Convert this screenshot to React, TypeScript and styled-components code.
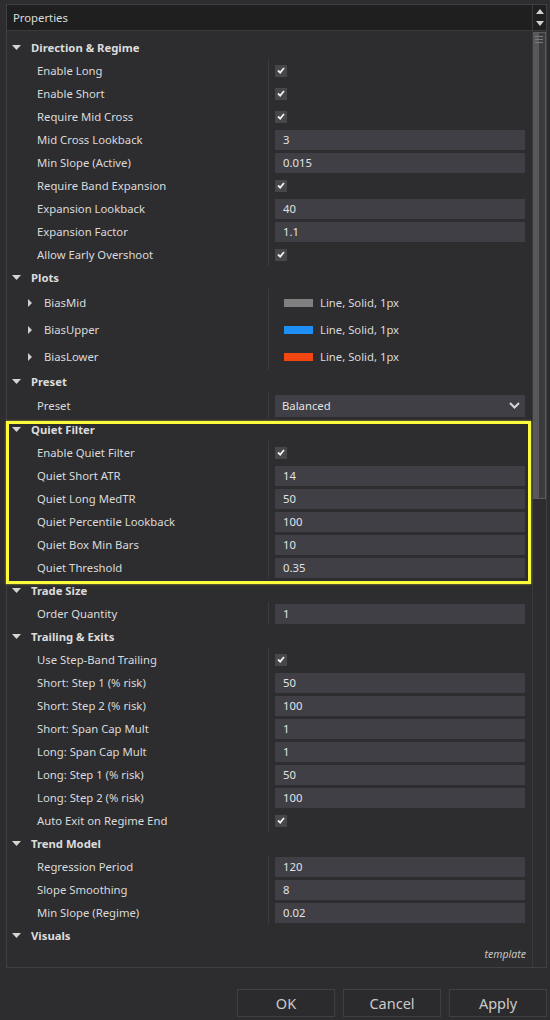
import styled, { createGlobalStyle } from 'styled-components'

type Field =
  | { kind: 'check'; label: string }
  | { kind: 'text'; label: string; value: string }
  | { kind: 'plot'; label: string; color: string }
  | { kind: 'select'; label: string; value: string }

interface SectionType {
  title: string
  fields: Field[]
  highlighted?: boolean
}

const sections: SectionType[] = [
  {
    title: 'Direction & Regime',
    fields: [
      { kind: 'check', label: 'Enable Long' },
      { kind: 'check', label: 'Enable Short' },
      { kind: 'check', label: 'Require Mid Cross' },
      { kind: 'text', label: 'Mid Cross Lookback', value: '3' },
      { kind: 'text', label: 'Min Slope (Active)', value: '0.015' },
      { kind: 'check', label: 'Require Band Expansion' },
      { kind: 'text', label: 'Expansion Lookback', value: '40' },
      { kind: 'text', label: 'Expansion Factor', value: '1.1' },
      { kind: 'check', label: 'Allow Early Overshoot' },
    ],
  },
  {
    title: 'Plots',
    fields: [
      { kind: 'plot', label: 'BiasMid', color: '#808080' },
      { kind: 'plot', label: 'BiasUpper', color: '#1e8ff5' },
      { kind: 'plot', label: 'BiasLower', color: '#f24712' },
    ],
  },
  {
    title: 'Preset',
    fields: [{ kind: 'select', label: 'Preset', value: 'Balanced' }],
  },
  {
    title: 'Quiet Filter',
    highlighted: true,
    fields: [
      { kind: 'check', label: 'Enable Quiet Filter' },
      { kind: 'text', label: 'Quiet Short ATR', value: '14' },
      { kind: 'text', label: 'Quiet Long MedTR', value: '50' },
      { kind: 'text', label: 'Quiet Percentile Lookback', value: '100' },
      { kind: 'text', label: 'Quiet Box Min Bars', value: '10' },
      { kind: 'text', label: 'Quiet Threshold', value: '0.35' },
    ],
  },
  {
    title: 'Trade Size',
    fields: [{ kind: 'text', label: 'Order Quantity', value: '1' }],
  },
  {
    title: 'Trailing & Exits',
    fields: [
      { kind: 'check', label: 'Use Step-Band Trailing' },
      { kind: 'text', label: 'Short: Step 1 (% risk)', value: '50' },
      { kind: 'text', label: 'Short: Step 2 (% risk)', value: '100' },
      { kind: 'text', label: 'Short: Span Cap Mult', value: '1' },
      { kind: 'text', label: 'Long: Span Cap Mult', value: '1' },
      { kind: 'text', label: 'Long: Step 1 (% risk)', value: '50' },
      { kind: 'text', label: 'Long: Step 2 (% risk)', value: '100' },
      { kind: 'check', label: 'Auto Exit on Regime End' },
    ],
  },
  {
    title: 'Trend Model',
    fields: [
      { kind: 'text', label: 'Regression Period', value: '120' },
      { kind: 'text', label: 'Slope Smoothing', value: '8' },
      { kind: 'text', label: 'Min Slope (Regime)', value: '0.02' },
    ],
  },
  { title: 'Visuals', fields: [] },
]

const GlobalStyle = createGlobalStyle`
  html, body {
    margin: 0;
    background: #2d2d30;
    overflow: hidden;
  }
  body {
    font-family: "Noto Sans", "Open Sans", sans-serif;
    font-size: 11.3px;
    color: #dadada;
  }
`

const Window = styled.div`
  width: 550px;
  height: 1020px;
  display: flex;
  flex-direction: column;
`

const Panel = styled.div`
  margin: 4px 0 0 6px;
  width: 539px;
  height: 962px;
  border: 1px solid #3f3f44;
  display: grid;
  grid-template-columns: 525px 14px;
  grid-template-rows: 26px 1fr;
`

const TitleBar = styled.div`
  background: #1f1f20;
  border-bottom: 1px solid #3a3a3d;
  display: flex;
  align-items: center;
  padding-left: 6px;
  color: #dcdcdc;
`

const ArrowCell = styled.div`
  background: #1f1f20;
  border-left: 1px solid #3a3a3d;
  border-bottom: 1px solid #3a3a3d;
  display: flex;
  flex-direction: column;
  align-items: center;
  justify-content: center;
  gap: 7px;
`

const Track = styled.div`
  border-left: 1px solid #3a3a3d;
  padding-top: 1px;
`

const Thumb = styled.div`
  height: 467px;
  border: 1px solid #5c5c5f;
  border-left: none;
  background: linear-gradient(to right, #58585b 0 6px, #3b3b3e 6px);
  display: flex;
  flex-direction: column;
  align-items: center;
  gap: 2px;
  padding-top: 3px;
  box-sizing: border-box;
`

const Grip = styled.div`
  width: 8px;
  height: 1px;
  background: #7a7a7d;
`

const Body = styled.div`
  display: flex;
  flex-direction: column;
  min-height: 0;
`

const List = styled.div`
  flex: 1;
  padding-top: 5px;
`

const Template = styled.div`
  height: 20px;
  padding: 0 6px 4px 0;
  text-align: right;
  font-style: italic;
  font-size: 10.5px;
  color: #c4c4c4;
`

const SectionBox = styled.div<{ $highlighted?: boolean }>`
  position: relative;
  &::after {
    content: '';
    display: ${(p) => (p.$highlighted ? 'block' : 'none')};
    position: absolute;
    top: 3px;
    bottom: -5px;
    left: -1px;
    right: 1px;
    border: 3px solid #fbfb3c;
    box-shadow: 0 0 2px rgba(251, 251, 60, 0.6);
    pointer-events: none;
  }
`

const SectionHeader = styled.div`
  height: 23px;
  display: flex;
  align-items: center;
  padding-left: 5px;
  gap: 10px;
  font-weight: 700;
  color: #dcdcdc;
`

const Row = styled.div<{ $height: number }>`
  height: ${(p) => p.$height}px;
  display: grid;
  grid-template-columns: 261px 1fr;
`

const Label = styled.div<{ $indent: number }>`
  display: flex;
  align-items: center;
  padding-left: ${(p) => p.$indent}px;
  gap: 11px;
  white-space: nowrap;
`

const ValueCell = styled.div`
  border-left: 1px solid #3c3c40;
  display: flex;
  align-items: center;
  padding: 0 7px 0 6px;
`

const CheckBox = styled.div`
  width: 12px;
  height: 12px;
  background: #46464b;
  display: flex;
  align-items: center;
  justify-content: center;
`

const TextBox = styled.div`
  flex: 1;
  height: 20px;
  background: #3f3f45;
  display: flex;
  align-items: center;
  padding-left: 8px;
  color: #e2e2e2;
`

const SelectBox = styled(TextBox)`
  height: 22px;
  padding: 0 5px 0 7px;
  justify-content: space-between;
`

const PlotValue = styled.div`
  display: flex;
  align-items: center;
  gap: 7px;
  padding-left: 9px;
`

const Swatch = styled.div<{ $color: string }>`
  width: 29px;
  height: 8px;
  background: ${(p) => p.$color};
`

const ButtonRow = styled.div`
  display: flex;
  justify-content: flex-end;
  gap: 8px;
  padding: 21px 3px 0 0;
`

const Button = styled.button`
  width: 98px;
  height: 28px;
  background: #2b2b2e;
  border: 1px solid #3f3f44;
  color: #cacaca;
  font-family: "Noto Sans", "Open Sans", sans-serif;
  font-size: 14.5px;
  padding: 0;
`

function Caret({ right }: { right?: boolean }) {
  return right ? (
    <svg width="5" height="8" viewBox="0 0 5 8">
      <polygon points="0,0 4,4 0,8" fill="#cfcfcf" />
    </svg>
  ) : (
    <svg width="9" height="6" viewBox="0 0 9 6">
      <polygon points="0,0 9,0 4.5,5" fill="#d4d4d4" />
    </svg>
  )
}

function Check() {
  return (
    <svg width="8" height="7" viewBox="0 0 8 7">
      <path d="M1 3.5 L3.2 5.6 L7 1" stroke="#f0f0f0" strokeWidth="1.8" fill="none" />
    </svg>
  )
}

function Chevron() {
  return (
    <svg width="11" height="7" viewBox="0 0 11 7">
      <path d="M1 1 L5.5 5.5 L10 1" stroke="#d6d6d6" strokeWidth="2" fill="none" />
    </svg>
  )
}

function FieldRow({ field }: { field: Field }) {
  if (field.kind === 'plot') {
    return (
      <Row $height={27}>
        <Label $indent={21}>
          <Caret right />
          {field.label}
        </Label>
        <ValueCell>
          <PlotValue>
            <Swatch $color={field.color} />
            Line, Solid, 1px
          </PlotValue>
        </ValueCell>
      </Row>
    )
  }
  return (
    <Row $height={field.kind === 'select' ? 25 : 23}>
      <Label $indent={30}>{field.label}</Label>
      <ValueCell>
        {field.kind === 'check' && (
          <CheckBox>
            <Check />
          </CheckBox>
        )}
        {field.kind === 'text' && <TextBox>{field.value}</TextBox>}
        {field.kind === 'select' && (
          <SelectBox>
            {field.value}
            <Chevron />
          </SelectBox>
        )}
      </ValueCell>
    </Row>
  )
}

export default function App() {
  return (
    <Window>
      <GlobalStyle />
      <Panel>
        <TitleBar>Properties</TitleBar>
        <ArrowCell>
          <svg width="8" height="5" viewBox="0 0 8 5">
            <polygon points="0,5 8,5 4,0" fill="#d0d0d0" />
          </svg>
          <svg width="8" height="5" viewBox="0 0 8 5">
            <polygon points="0,0 8,0 4,5" fill="#d0d0d0" />
          </svg>
        </ArrowCell>
        <Body>
          <List>
            {sections.map((s) => (
              <SectionBox key={s.title} $highlighted={s.highlighted}>
                <SectionHeader>
                  <Caret />
                  {s.title}
                </SectionHeader>
                {s.fields.map((f) => (
                  <FieldRow key={f.label} field={f} />
                ))}
              </SectionBox>
            ))}
          </List>
          <Template>template</Template>
        </Body>
        <Track>
          <Thumb>
            <Grip />
            <Grip />
            <Grip />
          </Thumb>
        </Track>
      </Panel>
      <ButtonRow>
        <Button>OK</Button>
        <Button>Cancel</Button>
        <Button>Apply</Button>
      </ButtonRow>
    </Window>
  )
}
